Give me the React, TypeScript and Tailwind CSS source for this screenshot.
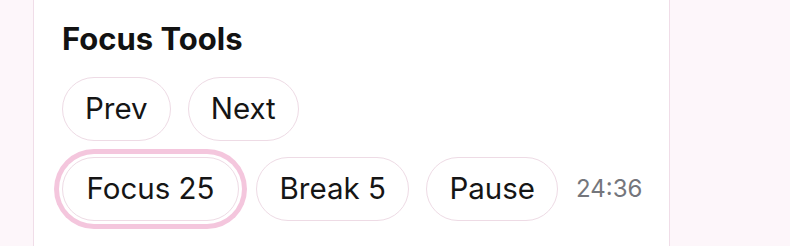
import React from "react";

const btn =
  "h-[64px] rounded-full border-[1.5px] border-[#eedbe5] bg-white text-[29.5px] text-[#151515] leading-none flex items-center";

export default function App() {
  return (
    <div
      className="w-[790px] h-[246px] bg-[#fdf6fa] flex overflow-hidden"
      style={{ fontFamily: "Inter, 'Noto Sans', sans-serif" }}
    >
      <div className="ml-[33px] w-[637px] h-full border-x-[1.5px] border-[#f0dde8] bg-white pl-[28px] pt-[21px]">
        <h2 className="text-[31px] font-bold text-[#121212] leading-[36px]">
          Focus Tools
        </h2>
        <div className="mt-[20px] flex flex-col gap-[16px]">
          <div className="flex gap-[17px]">
            <button className={btn + " px-[22px]"}>Prev</button>
            <button className={btn + " px-[22px]"}>Next</button>
          </div>
          <div className="flex items-center gap-[17px]">
            <button className={btn + " px-[23.5px] ring-[5px] ring-[#f4c6dd] ring-offset-[3px] ring-offset-white"}>
              Focus 25
            </button>
            <button className={btn + " px-[22.5px]"}>Break 5</button>
            <button className={btn + " px-[22px]"}>Pause</button>
            <span className="ml-[1px] text-[24px] text-[#74767c]">24:36</span>
          </div>
        </div>
      </div>
    </div>
  );
}
